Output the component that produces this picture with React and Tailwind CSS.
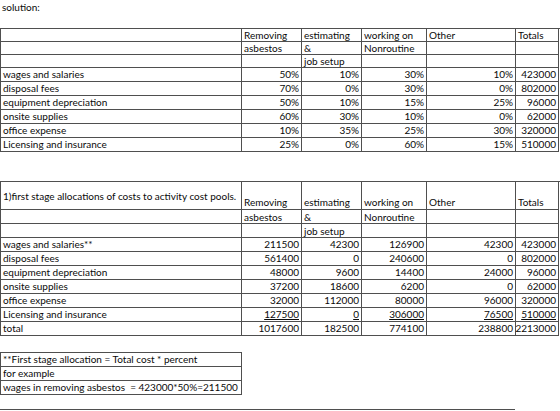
const grid = "grid grid-cols-[241px_60px_60px_65px_89px_43px]";
const cell = "border-r border-b border-[#4f4f4f] px-[2px] whitespace-nowrap flex items-end";

const table1 = [
  ["wages and salaries", "50%", "10%", "30%", "10%", "423000"],
  ["disposal fees", "70%", "0%", "30%", "0%", "802000"],
  ["equipment depreciation", "50%", "10%", "15%", "25%", "96000"],
  ["onsite supplies", "60%", "30%", "10%", "0%", "62000"],
  ["office expense", "10%", "35%", "25%", "30%", "320000"],
  ["Licensing and insurance", "25%", "0%", "60%", "15%", "510000"],
];

const table2 = [
  ["wages and salaries**", "211500", "42300", "126900", "42300", "423000"],
  ["disposal fees", "561400", "0", "240600", "0", "802000"],
  ["equipment depreciation", "48000", "9600", "14400", "24000", "96000"],
  ["onsite supplies", "37200", "18600", "6200", "0", "62000"],
  ["office expense", "32000", "112000", "80000", "96000", "320000"],
  ["Licensing and insurance", "127500", "0", "306000", "76500", "510000"],
  ["total", "1017600", "182500", "774100", "238800", "2213000"],
];

const headers = [
  ["", "Removing", "estimating", "working on", "Other", "Totals"],
  ["", "asbestos", "&", "Nonroutine", "", ""],
  ["", "", "job setup", "", "", ""],
];

function Row({ cells, h = "h-[14px]", underline = false }) {
  return (
    <div className={`${grid} ${h}`}>
      {cells.map((c, i) => (
        <div key={i} className={`${cell} ${i > 0 ? "justify-end pl-0" : ""}`}>
          <span className={`leading-[13px] ${underline && i > 0 ? "underline underline-offset-[1px]" : ""}`}>{c}</span>
        </div>
      ))}
    </div>
  );
}

function HeaderRow({ cells, h = "h-[13px]" }) {
  return (
    <div className={`${grid} ${h}`}>
      {cells.map((c, i) => (
        <div key={i} className={cell}>
          <span className="leading-[12px]">{c}</span>
        </div>
      ))}
    </div>
  );
}

export default function App() {
  return (
    <div className="w-[560px] h-[411px] overflow-hidden bg-white text-[#0a0a0a] font-['Lato',sans-serif] text-[10px]">
      <div className="h-[14px] leading-[14px] pl-[2px]">solution:</div>

      <div className="mt-[14px] w-[560px] border-l border-t border-[#4f4f4f]">
        {headers.map((r, i) => (
          <HeaderRow key={i} cells={r} />
        ))}
        {table1.map((r, i) => (
          <Row key={i} cells={r} />
        ))}
      </div>

      <div className="mt-[29px] w-[560px] border-l border-t border-[#4f4f4f]">
        <div className={`${grid} h-[28px]`}>
          <div className="border-r border-b border-[#4f4f4f] px-[2px] whitespace-nowrap flex items-center">
            <span className="leading-[12px]">1)first stage allocations of costs to activity cost pools.</span>
          </div>
          {headers[0].slice(1).map((c, i) => (
            <div key={i} className={cell}>
              <span className="leading-[13px]">{c}</span>
            </div>
          ))}
        </div>
        <HeaderRow cells={headers[1]} h="h-[14px]" />
        <HeaderRow cells={headers[2]} h="h-[14px]" />
        {table2.map((r, i) => (
          <Row key={i} cells={r} underline={i === 5} />
        ))}
      </div>

      <div className="mt-[16px] w-[242px] border-l border-t border-[#4f4f4f]">
        {[
          "**First stage allocation = Total cost * percent",
          "for example",
          "wages in removing asbestos  = 423000*50%=211500",
        ].map((t, i) => (
          <div key={i} className="h-[14px] border-r border-b border-[#4f4f4f] px-[2px] flex items-end whitespace-pre">
            <span className="leading-[13px]">{t}</span>
          </div>
        ))}
      </div>

      <div className="mt-[14px] w-[515px] border-t border-[#4f4f4f]" />
    </div>
  );
}
